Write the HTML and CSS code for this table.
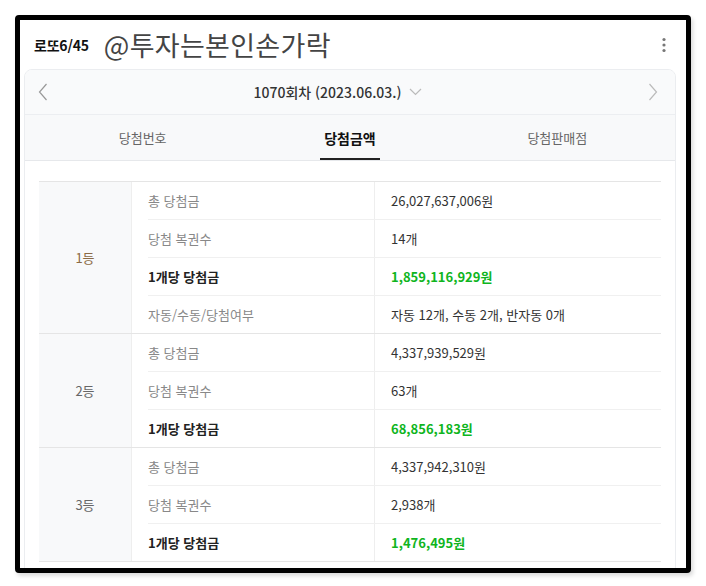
FILE: index.html
```html
<!DOCTYPE html>
<html lang="ko">
<head>
<meta charset="utf-8">
<link rel="stylesheet" href="styles.css">
</head>
<body>
<div class="frame">
  <div class="header">
    <span class="brand">로또6/45</span>
    <span class="watermark">@투자는본인손가락</span>
    <svg class="more" width="6" height="16" viewBox="0 0 6 16"><circle cx="3" cy="2.5" r="1.6"/><circle cx="3" cy="8" r="1.6"/><circle cx="3" cy="13.5" r="1.6"/></svg>
  </div>
  <div class="card">
    <div class="nav">
      <svg class="arrow" width="10" height="18" viewBox="0 0 10 18"><path d="M8.5 1 L1.5 9 L8.5 17" fill="none" stroke="#999" stroke-width="1.2"/></svg>
      <div class="round">1070회차 (2023.06.03.)
        <svg class="caret" width="13" height="8" viewBox="0 0 13 8"><path d="M1 1 L6.5 6.5 L12 1" fill="none" stroke="#bbb" stroke-width="1.2"/></svg>
      </div>
      <svg class="arrow" width="10" height="18" viewBox="0 0 10 18"><path d="M1.5 1 L8.5 9 L1.5 17" fill="none" stroke="#bbb" stroke-width="1.2"/></svg>
    </div>
    <div class="tabs">
      <div class="tab">당첨번호</div>
      <div class="tab active"><span>당첨금액</span></div>
      <div class="tab">당첨판매점</div>
    </div>
    <div class="content">
      <div class="table">
        <div class="group">
          <div class="rank first">1등</div>
          <div class="rows">
            <div class="row"><div class="label">총 당첨금</div><div class="value">26,027,637,006원</div></div>
            <div class="row"><div class="label">당첨 복권수</div><div class="value">14개</div></div>
            <div class="row"><div class="label strong">1개당 당첨금</div><div class="value green">1,859,116,929원</div></div>
            <div class="row"><div class="label">자동/수동/당첨여부</div><div class="value">자동 12개, 수동 2개, 반자동 0개</div></div>
          </div>
        </div>
        <div class="group">
          <div class="rank">2등</div>
          <div class="rows">
            <div class="row"><div class="label">총 당첨금</div><div class="value">4,337,939,529원</div></div>
            <div class="row"><div class="label">당첨 복권수</div><div class="value">63개</div></div>
            <div class="row"><div class="label strong">1개당 당첨금</div><div class="value green">68,856,183원</div></div>
          </div>
        </div>
        <div class="group">
          <div class="rank">3등</div>
          <div class="rows">
            <div class="row"><div class="label">총 당첨금</div><div class="value">4,337,942,310원</div></div>
            <div class="row"><div class="label">당첨 복권수</div><div class="value">2,938개</div></div>
            <div class="row"><div class="label strong">1개당 당첨금</div><div class="value green">1,476,495원</div></div>
          </div>
        </div>
      </div>
    </div>
  </div>
</div>
</body>
</html>
```

FILE: styles.css
```css
* { box-sizing: border-box; }
html, body { margin: 0; padding: 0; background: #fff; }
body {
  font-family: "Noto Sans CJK KR", "Noto Sans", sans-serif;
  width: 706px;
  height: 586px;
  overflow: hidden;
}
.frame {
  margin: 15px 0 0 15px;
  width: 676px;
  height: 558px;
  border: 5px solid #000;
  border-radius: 4px;
  background: #fff;
  overflow: hidden;
  box-shadow: 2px 3px 4px rgba(0,0,0,0.15);
}
.header {
  height: 49px;
  display: flex;
  align-items: center;
  padding: 0 0 0 14px;
}
.brand {
  font-size: 14px;
  font-weight: 700;
  color: #111;
  letter-spacing: -0.2px;
}
.watermark {
  font-size: 27px;
  color: #444;
  margin-left: 15px;
  letter-spacing: 0.3px;
}
.more {
  margin-left: auto;
  margin-right: 19px;
  fill: #777;
}
.card {
  margin: 0 10px 0 4px;
  border: 1px solid #ebedf0;
  border-radius: 8px 8px 0 0;
  background: #fff;
  overflow: hidden;
  height: 520px;
}
.nav {
  height: 45px;
  display: flex;
  align-items: center;
  justify-content: space-between;
  padding: 0 17px 0 13px;
  background: #f9fafb;
  border-bottom: 1px solid #eceef1;
}
.round {
  display: flex;
  align-items: center;
  font-size: 14px;
  font-weight: 500;
  color: #333;
  margin-right: 20px;
}
.caret { margin-left: 8px; }
.tabs {
  height: 46px;
  display: flex;
  padding: 0 14px;
  background: #f8f9fa;
  border-bottom: 1px solid #e6e8eb;
}
.tab {
  flex: 1;
  display: flex;
  align-items: center;
  justify-content: center;
  font-size: 13px;
  color: #666;
}
.tab.active span {
  height: 100%;
  display: flex;
  align-items: center;
  color: #111;
  font-size: 14px;
  font-weight: 700;
  border-bottom: 2px solid #222;
  padding: 2px 4px 0;
}
.content {
  padding: 20px 14px 0;
}
.table {
  border-top: 1px solid #e5e5e5;
}
.group {
  display: flex;
  border-bottom: 1px solid #e5e5e5;
}
.rank {
  width: 93px;
  flex: none;
  background: #f8f9fa;
  border-right: 1px solid #eeeeee;
  display: flex;
  align-items: center;
  justify-content: center;
  font-size: 13px;
  color: #666;
}
.rank.first { color: #8b6a45; }
.rows { flex: 1; }
.row {
  display: flex;
  height: 38px;
  margin-left: 16px;
  border-bottom: 1px solid #f0f0f0;
}
.row:last-child {
  height: 37px;
  border-bottom: none;
}
.label {
  width: 227px;
  flex: none;
  border-right: 1px solid #eeeeee;
  display: flex;
  align-items: center;
  font-size: 13px;
  color: #888;
}
.label.strong { color: #222; font-weight: 700; }
.value {
  padding-left: 16px;
  display: flex;
  align-items: center;
  font-size: 13px;
  color: #333;
}
.value.green { color: #0fb51e; font-weight: 700; }
```
